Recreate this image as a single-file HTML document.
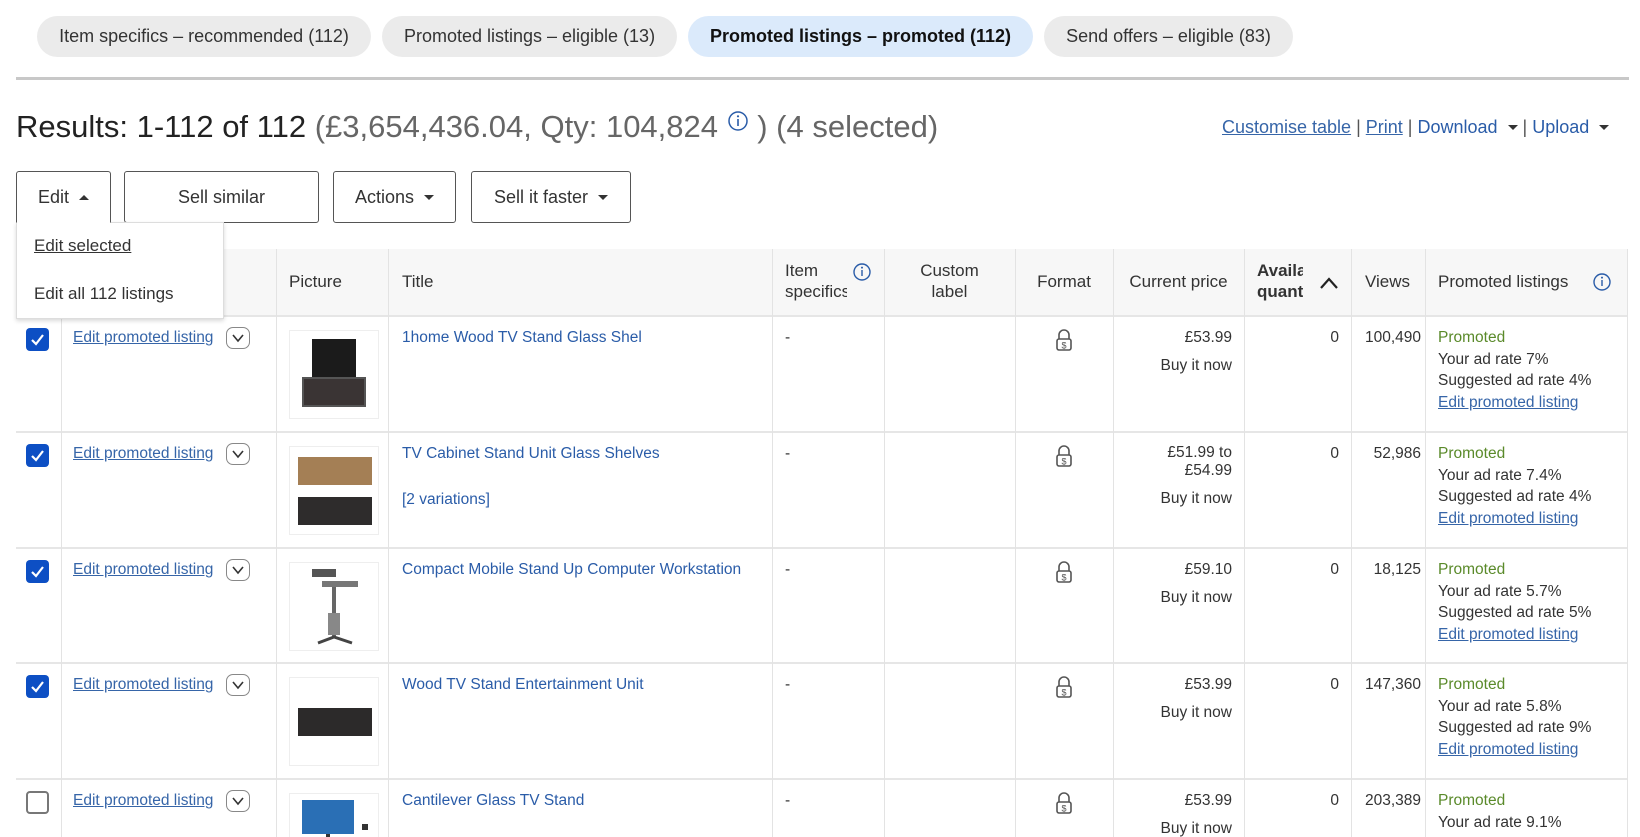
<!DOCTYPE html>
<html style="overflow:hidden;height:837px"><head><meta charset="utf-8">
<style>
*{box-sizing:border-box;margin:0;padding:0}
html,body{width:1640px;height:837px;overflow:hidden}
body{background:#fff;font-family:"Liberation Sans",Arial,sans-serif;color:#333;position:relative}
#w{position:absolute;left:0;top:0;width:1640px;height:837px;overflow:hidden}
.a{position:absolute}
.pill{position:absolute;top:16px;height:41px;border-radius:21px;background:#ebebeb;font-size:18px;line-height:41px;text-align:center;color:#333}
.btn{position:absolute;top:171px;height:52px;border:1px solid #555;border-radius:3px;font-size:18px;line-height:50px;text-align:center;background:#fff;color:#333}
.tri{display:inline-block;width:0;height:0;border-left:5px solid transparent;border-right:5px solid transparent;border-top:5px solid #333;vertical-align:middle;margin-left:10px;margin-top:-2px}
.triu{border-top:none;border-bottom:5px solid #333}
a,.lk{color:#3665a8;text-decoration:underline}
.blue{color:#2a5ca8}
.vl{position:absolute;top:249px;bottom:0;width:1px;background:#e3e3e3}
.hl{position:absolute;left:16px;width:1612px;height:2px;background:#e6e6e6}
.t{position:absolute;font-size:15.5px;line-height:20px;white-space:nowrap}
.hd{position:absolute;font-size:17px;line-height:21px;color:#333}
.cb{position:absolute;left:26px;width:23px;height:23px;border-radius:4px;background:#0d4fc4}
.cb svg{position:absolute;left:3px;top:3px}
.cbe{background:#fff;border:2px solid #777}
.chev{position:absolute;left:226px;width:24px;height:22px;border:1px solid #888;border-radius:7px;background:#fff}
.img{position:absolute;left:289px;width:90px;height:89px;border:1px solid #eee;background:#fff;overflow:hidden}
.green{color:#5a8a2a}
</style></head><body><div id="w">

<div class="pill" style="left:37px;width:334px">Item specifics – recommended (112)</div>
<div class="pill" style="left:382px;width:295px">Promoted listings – eligible (13)</div>
<div class="pill" style="left:688px;width:345px;background:#dbeafb;font-weight:bold;color:#111">Promoted listings – promoted (112)</div>
<div class="pill" style="left:1044px;width:249px">Send offers – eligible (83)</div>
<div class="a" style="left:16px;top:77px;width:1613px;height:3px;background:#c8c8c8"></div>

<div class="a" style="left:16px;top:108px;font-size:31px;line-height:38px;color:#222;white-space:nowrap">Results: 1-112 of 112 <span style="color:#666">(£3,654,436.04, Qty: 104,824 <svg width="22" height="22" viewBox="0 0 22 22" style="vertical-align:top;margin-top:2px"><circle cx="11" cy="11" r="9" fill="none" stroke="#2a5ca8" stroke-width="1.5"/><rect x="10.2" y="9" width="1.6" height="7" fill="#2a5ca8"/><circle cx="11" cy="6.3" r="1.1" fill="#2a5ca8"/></svg> ) (4 selected)</span></div>

<div class="a" style="left:1222px;top:116px;font-size:18px;line-height:22px;white-space:nowrap;color:#555"><span class="lk">Customise table</span> | <span class="lk">Print</span> | <span class="blue">Download</span><span class="tri"></span> | <span class="blue">Upload</span><span class="tri"></span></div>

<div class="btn" style="left:16px;width:95px;border-bottom-color:#fff;border-radius:3px 3px 0 0;z-index:3">Edit<span class="tri triu"></span></div>
<div class="btn" style="left:124px;width:195px">Sell similar</div>
<div class="btn" style="left:333px;width:123px">Actions<span class="tri"></span></div>
<div class="btn" style="left:471px;width:160px">Sell it faster<span class="tri"></span></div>

<div class="a" style="left:16px;top:249px;width:1612px;height:67px;background:#f7f7f7"></div>
<div class="hl" style="top:315px"></div>
<div class="hl" style="top:431px"></div>
<div class="hl" style="top:547px"></div>
<div class="hl" style="top:662px"></div>
<div class="hl" style="top:778px"></div>
<div class="vl" style="left:61px"></div>
<div class="vl" style="left:276px"></div>
<div class="vl" style="left:388px"></div>
<div class="vl" style="left:772px"></div>
<div class="vl" style="left:884px"></div>
<div class="vl" style="left:1015px"></div>
<div class="vl" style="left:1113px"></div>
<div class="vl" style="left:1244px"></div>
<div class="vl" style="left:1351px"></div>
<div class="vl" style="left:1425px"></div>
<div class="vl" style="left:1627px"></div>

<div class="hd" style="left:289px;top:271px">Picture</div>
<div class="hd" style="left:402px;top:271px">Title</div>
<div class="hd" style="left:785px;top:260px;width:62px;overflow:hidden;white-space:nowrap">Item<br>specifics</div>
<svg class="a" style="left:852px;top:262px" width="20" height="20" viewBox="0 0 20 20"><circle cx="10" cy="10" r="8" fill="none" stroke="#2a5ca8" stroke-width="1.4"/><rect x="9.3" y="8" width="1.4" height="6" fill="#2a5ca8"/><circle cx="10" cy="5.6" r="1" fill="#2a5ca8"/></svg>
<div class="hd" style="left:884px;width:131px;text-align:center;top:260px">Custom<br>label</div>
<div class="hd" style="left:1015px;width:98px;text-align:center;top:271px">Format</div>
<div class="hd" style="left:1113px;width:131px;text-align:center;top:271px">Current price</div>
<div class="hd" style="left:1257px;top:260px;width:46px;overflow:hidden;font-weight:bold;white-space:nowrap">Available<br>quantity</div>
<svg class="a" style="left:1319px;top:276px" width="20" height="14" viewBox="0 0 20 14"><path d="M2 12 L10 3 L18 12" fill="none" stroke="#222" stroke-width="2.2"/></svg>
<div class="hd" style="left:1365px;top:271px">Views</div>
<div class="hd" style="left:1438px;top:271px">Promoted listings</div>
<svg class="a" style="left:1592px;top:272px" width="20" height="20" viewBox="0 0 20 20"><circle cx="10" cy="10" r="8" fill="none" stroke="#2a5ca8" stroke-width="1.4"/><rect x="9.3" y="8" width="1.4" height="6" fill="#2a5ca8"/><circle cx="10" cy="5.6" r="1" fill="#2a5ca8"/></svg>

<div class="a" style="left:16px;top:222px;width:208px;height:97px;background:#fff;border:1px solid #ddd;box-shadow:0 2px 4px rgba(0,0,0,.15);z-index:2">
<div class="a" style="left:17px;top:13px;font-size:17px;text-decoration:underline;color:#333">Edit selected</div>
<div class="a" style="left:17px;top:61px;font-size:17px;color:#333;white-space:nowrap">Edit all 112 listings</div>
</div>

<!-- ROW 1 -->
<div class="cb" style="top:328px"><svg width="17" height="17" viewBox="0 0 17 17"><path d="M3 9 L7 13 L14 4" fill="none" stroke="#fff" stroke-width="2.2"/></svg></div>
<div class="t lk" style="left:73px;top:328px">Edit promoted listing</div>
<div class="chev" style="top:327px"><svg width="22" height="20" viewBox="0 0 22 20"><path d="M6 7 L11 13 L16 7" fill="none" stroke="#333" stroke-width="1.6"/></svg></div>
<div class="img" style="top:330px"><div class="a" style="left:22px;top:8px;width:44px;height:40px;background:#1b1b1b"></div><div class="a" style="left:12px;top:46px;width:64px;height:30px;background:#3a3434;border:2px solid #555"></div></div>
<div class="t blue" style="left:402px;top:328px">1home Wood TV Stand Glass Shel</div>
<div class="t" style="left:785px;top:328px">-</div>
<svg class="a" style="left:1054px;top:328px" width="20" height="24" viewBox="0 0 20 24"><path d="M5 11 V7 A5 5 0 0 1 15 7 V11" fill="none" stroke="#555" stroke-width="1.6"/><rect x="3" y="11" width="14" height="11" rx="2" fill="none" stroke="#555" stroke-width="1.6"/><text x="10" y="20.5" font-size="9" text-anchor="middle" fill="#555" font-family="Liberation Sans">$</text></svg>
<div class="t" style="left:1113px;width:119px;text-align:right;top:328px">£53.99</div>
<div class="t" style="left:1113px;width:119px;text-align:right;top:356px">Buy it now</div>
<div class="t" style="left:1244px;width:95px;text-align:right;top:328px">0</div>
<div class="t" style="left:1351px;width:70px;text-align:right;top:328px">100,490</div>
<div class="t green" style="left:1438px;top:328px">Promoted</div>
<div class="t" style="left:1438px;top:350px">Your ad rate 7%</div>
<div class="t" style="left:1438px;top:371px">Suggested ad rate 4%</div>
<div class="t lk" style="left:1438px;top:393px">Edit promoted listing</div>

<!-- ROW 2 -->
<div class="cb" style="top:444px"><svg width="17" height="17" viewBox="0 0 17 17"><path d="M3 9 L7 13 L14 4" fill="none" stroke="#fff" stroke-width="2.2"/></svg></div>
<div class="t lk" style="left:73px;top:444px">Edit promoted listing</div>
<div class="chev" style="top:443px"><svg width="22" height="20" viewBox="0 0 22 20"><path d="M6 7 L11 13 L16 7" fill="none" stroke="#333" stroke-width="1.6"/></svg></div>
<div class="img" style="top:446px"><div class="a" style="left:8px;top:10px;width:74px;height:28px;background:#a47f55"></div><div class="a" style="left:8px;top:50px;width:74px;height:28px;background:#2e2c2c"></div></div>
<div class="t blue" style="left:402px;top:444px">TV Cabinet Stand Unit Glass Shelves</div>
<div class="t blue" style="left:402px;top:490px">[2 variations]</div>
<div class="t" style="left:785px;top:444px">-</div>
<svg class="a" style="left:1054px;top:444px" width="20" height="24" viewBox="0 0 20 24"><path d="M5 11 V7 A5 5 0 0 1 15 7 V11" fill="none" stroke="#555" stroke-width="1.6"/><rect x="3" y="11" width="14" height="11" rx="2" fill="none" stroke="#555" stroke-width="1.6"/><text x="10" y="20.5" font-size="9" text-anchor="middle" fill="#555" font-family="Liberation Sans">$</text></svg>
<div class="t" style="left:1113px;width:119px;text-align:right;top:444px;line-height:18px">£51.99 to<br>£54.99</div>
<div class="t" style="left:1113px;width:119px;text-align:right;top:489px">Buy it now</div>
<div class="t" style="left:1244px;width:95px;text-align:right;top:444px">0</div>
<div class="t" style="left:1351px;width:70px;text-align:right;top:444px">52,986</div>
<div class="t green" style="left:1438px;top:444px">Promoted</div>
<div class="t" style="left:1438px;top:466px">Your ad rate 7.4%</div>
<div class="t" style="left:1438px;top:487px">Suggested ad rate 4%</div>
<div class="t lk" style="left:1438px;top:509px">Edit promoted listing</div>

<!-- ROW 3 -->
<div class="cb" style="top:560px"><svg width="17" height="17" viewBox="0 0 17 17"><path d="M3 9 L7 13 L14 4" fill="none" stroke="#fff" stroke-width="2.2"/></svg></div>
<div class="t lk" style="left:73px;top:560px">Edit promoted listing</div>
<div class="chev" style="top:559px"><svg width="22" height="20" viewBox="0 0 22 20"><path d="M6 7 L11 13 L16 7" fill="none" stroke="#333" stroke-width="1.6"/></svg></div>
<div class="img" style="top:562px"><svg width="90" height="89" viewBox="0 0 90 89"><rect x="22" y="6" width="24" height="8" fill="#555"/><rect x="32" y="18" width="36" height="6" fill="#777"/><rect x="42" y="24" width="4" height="50" fill="#666"/><rect x="38" y="50" width="12" height="22" fill="#888"/><path d="M28 80 L44 74 L62 80" stroke="#444" stroke-width="3" fill="none"/></svg></div>
<div class="t blue" style="left:402px;top:560px">Compact Mobile Stand Up Computer Workstation</div>
<div class="t" style="left:785px;top:560px">-</div>
<svg class="a" style="left:1054px;top:560px" width="20" height="24" viewBox="0 0 20 24"><path d="M5 11 V7 A5 5 0 0 1 15 7 V11" fill="none" stroke="#555" stroke-width="1.6"/><rect x="3" y="11" width="14" height="11" rx="2" fill="none" stroke="#555" stroke-width="1.6"/><text x="10" y="20.5" font-size="9" text-anchor="middle" fill="#555" font-family="Liberation Sans">$</text></svg>
<div class="t" style="left:1113px;width:119px;text-align:right;top:560px">£59.10</div>
<div class="t" style="left:1113px;width:119px;text-align:right;top:588px">Buy it now</div>
<div class="t" style="left:1244px;width:95px;text-align:right;top:560px">0</div>
<div class="t" style="left:1351px;width:70px;text-align:right;top:560px">18,125</div>
<div class="t green" style="left:1438px;top:560px">Promoted</div>
<div class="t" style="left:1438px;top:582px">Your ad rate 5.7%</div>
<div class="t" style="left:1438px;top:603px">Suggested ad rate 5%</div>
<div class="t lk" style="left:1438px;top:625px">Edit promoted listing</div>

<!-- ROW 4 -->
<div class="cb" style="top:675px"><svg width="17" height="17" viewBox="0 0 17 17"><path d="M3 9 L7 13 L14 4" fill="none" stroke="#fff" stroke-width="2.2"/></svg></div>
<div class="t lk" style="left:73px;top:675px">Edit promoted listing</div>
<div class="chev" style="top:674px"><svg width="22" height="20" viewBox="0 0 22 20"><path d="M6 7 L11 13 L16 7" fill="none" stroke="#333" stroke-width="1.6"/></svg></div>
<div class="img" style="top:677px"><div class="a" style="left:8px;top:30px;width:74px;height:28px;background:#2c2a2a"></div></div>
<div class="t blue" style="left:402px;top:675px">Wood TV Stand Entertainment Unit</div>
<div class="t" style="left:785px;top:675px">-</div>
<svg class="a" style="left:1054px;top:675px" width="20" height="24" viewBox="0 0 20 24"><path d="M5 11 V7 A5 5 0 0 1 15 7 V11" fill="none" stroke="#555" stroke-width="1.6"/><rect x="3" y="11" width="14" height="11" rx="2" fill="none" stroke="#555" stroke-width="1.6"/><text x="10" y="20.5" font-size="9" text-anchor="middle" fill="#555" font-family="Liberation Sans">$</text></svg>
<div class="t" style="left:1113px;width:119px;text-align:right;top:675px">£53.99</div>
<div class="t" style="left:1113px;width:119px;text-align:right;top:703px">Buy it now</div>
<div class="t" style="left:1244px;width:95px;text-align:right;top:675px">0</div>
<div class="t" style="left:1351px;width:70px;text-align:right;top:675px">147,360</div>
<div class="t green" style="left:1438px;top:675px">Promoted</div>
<div class="t" style="left:1438px;top:697px">Your ad rate 5.8%</div>
<div class="t" style="left:1438px;top:718px">Suggested ad rate 9%</div>
<div class="t lk" style="left:1438px;top:740px">Edit promoted listing</div>

<!-- ROW 5 -->
<div class="cb cbe" style="top:791px"></div>
<div class="t lk" style="left:73px;top:791px">Edit promoted listing</div>
<div class="chev" style="top:790px"><svg width="22" height="20" viewBox="0 0 22 20"><path d="M6 7 L11 13 L16 7" fill="none" stroke="#333" stroke-width="1.6"/></svg></div>
<div class="img" style="top:793px;height:60px;border-bottom:none"><div class="a" style="left:12px;top:6px;width:52px;height:34px;background:#2a6fb5"></div><div class="a" style="left:36px;top:40px;width:4px;height:10px;background:#333"></div><div class="a" style="left:72px;top:30px;width:6px;height:6px;background:#333"></div></div>
<div class="t blue" style="left:402px;top:791px">Cantilever Glass TV Stand</div>
<div class="t" style="left:785px;top:791px">-</div>
<svg class="a" style="left:1054px;top:791px" width="20" height="24" viewBox="0 0 20 24"><path d="M5 11 V7 A5 5 0 0 1 15 7 V11" fill="none" stroke="#555" stroke-width="1.6"/><rect x="3" y="11" width="14" height="11" rx="2" fill="none" stroke="#555" stroke-width="1.6"/><text x="10" y="20.5" font-size="9" text-anchor="middle" fill="#555" font-family="Liberation Sans">$</text></svg>
<div class="t" style="left:1113px;width:119px;text-align:right;top:791px">£53.99</div>
<div class="t" style="left:1113px;width:119px;text-align:right;top:819px">Buy it now</div>
<div class="t" style="left:1244px;width:95px;text-align:right;top:791px">0</div>
<div class="t" style="left:1351px;width:70px;text-align:right;top:791px">203,389</div>
<div class="t green" style="left:1438px;top:791px">Promoted</div>
<div class="t" style="left:1438px;top:813px">Your ad rate 9.1%</div>

</div></body></html>
